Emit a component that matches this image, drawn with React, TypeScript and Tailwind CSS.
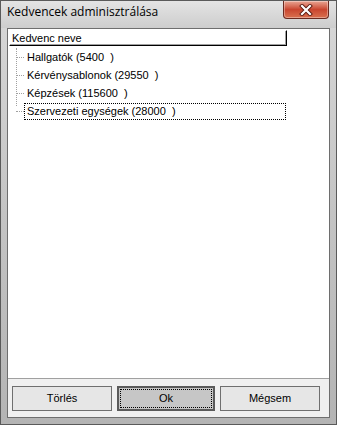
const items = [
  "Hallgatók (5400  )",
  "Kérvénysablonok (29550  )",
  "Képzések (115600  )",
  "Szervezeti egységek (28000  )",
];

function CloseButton() {
  return (
    <div className="absolute left-[282px] top-0 w-[46px] h-[18px] rounded-b-[4px] border border-t-0 border-[#6b2a20] bg-gradient-to-b from-[#e8a594] via-[#c9452f] to-[#d9704f] flex items-center justify-center shadow-[inset_0_0_0_1px_rgba(255,255,255,0.35)]">
      <svg width="14" height="12" viewBox="0 0 14 12">
        <path d="M3 2 L11 10 M11 2 L3 10" stroke="#5a1a10" strokeWidth="4" strokeLinecap="square" />
        <path d="M3 2 L11 10 M11 2 L3 10" stroke="#ffffff" strokeWidth="2.2" strokeLinecap="square" />
      </svg>
    </div>
  );
}

export default function App() {
  return (
    <div className="w-[337px] h-[425px] relative flex flex-col bg-gradient-to-b from-[#d8d8d8] via-[#c4c4c4] to-[#b4b4b4] border border-[#5a5a5a] overflow-hidden" style={{ fontFamily: '"Liberation Sans", Arial, sans-serif' }}>
      <div className="h-[27px] shrink-0 flex items-center pl-[6px] pb-[6px] bg-gradient-to-b from-[#e4e4e4] to-[#cdcdcd]">
        <span className="text-[12px] text-black" style={{ fontFamily: '"Open Sans", "Noto Sans", sans-serif' }}>Kedvencek adminisztrálása</span>
      </div>
      <CloseButton />
      <div className="flex-1 flex flex-col mx-[6px] border border-[#6e6e6e] bg-[#f0f0f0]">
        <div className="flex-1 bg-white border-b border-[#a0a0a0] flex flex-col">
          <div className="h-[16px] mt-[1px] ml-[1px] w-[278px] border-t border-l border-white border-r border-b border-r-black border-b-black bg-white flex items-center pl-[2px] shadow-[inset_-1px_-1px_0_#a0a0a0]">
            <span className="text-[11px] text-black leading-none">Kedvenc neve</span>
          </div>
          <div className="relative mt-[2px] ml-[8px]">
            <div className="absolute left-0 top-0 h-[58px] border-l border-dotted border-[#a0a0a0]" />
            <div className="flex flex-col">
              {items.map((t, i) => (
                <div key={t} className="h-[18px] flex items-center">
                  <div className="w-[8px] border-t border-dotted border-[#a0a0a0]" />
                  <div className={"h-[17px] flex items-center pl-[2px] " + (i === items.length - 1 ? "w-[262px] border border-dotted border-black" : "border border-transparent")}>
                    <span className="text-[11px] text-black leading-none whitespace-pre">{t}</span>
                  </div>
                </div>
              ))}
            </div>
          </div>
        </div>
        <div className="h-[38px] shrink-0 flex items-start pt-[7px] pl-[4px] gap-[5px]">
          <button className="w-[100px] h-[25px] border border-[#6f6f6f] bg-[#e6e6e6] text-[11px] text-black">Törlés</button>
          <button className="w-[98px] h-[25px] border-2 border-[#5a5a5a] bg-[#c6c6c6] text-[11px] text-black p-[1px]">
            <div className="w-full h-full border border-dotted border-black flex items-center justify-center">Ok</div>
          </button>
          <button className="w-[100px] h-[25px] border border-[#6f6f6f] bg-[#e6e6e6] text-[11px] text-black">Mégsem</button>
        </div>
      </div>
      <div className="h-[6px] shrink-0" />
    </div>
  );
}
